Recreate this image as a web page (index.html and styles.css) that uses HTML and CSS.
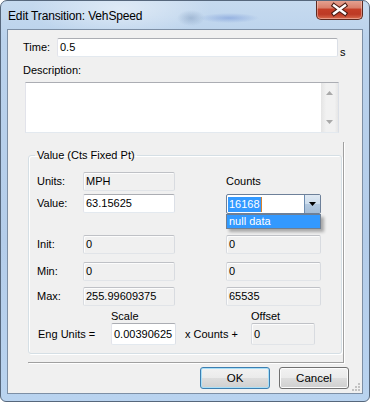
FILE: index.html
```html
<!DOCTYPE html>
<html lang="en">
<head>
    <meta charset="UTF-8">
    <title>Edit Transition: VehSpeed</title>
    <link rel="stylesheet" href="styles.css">
</head>
<body>
    <div class="window">
        <div class="titlebar">
            <span class="title">Edit Transition: VehSpeed</span>
            <div class="close-btn">
                <svg width="45" height="19" viewBox="0 0 45 19">
                    <path d="M17 5.5 L28 13.5 M28 5.5 L17 13.5" stroke="#4b1c14" stroke-width="4.6" stroke-linecap="square" fill="none"/>
                    <path d="M17 5.5 L28 13.5 M28 5.5 L17 13.5" stroke="#ffffff" stroke-width="2.4" stroke-linecap="square" fill="none"/>
                </svg>
            </div>
        </div>

        <div class="client">
            <div class="time-row">
                <span class="time-label">Time:</span>
                <div class="tb time-box">0.5</div>
                <span class="unit">s</span>
            </div>

            <div class="desc-label">Description:</div>
            <div class="textarea">
                <div class="vscroll">
                    <svg width="7" height="4" viewBox="0 0 7 4"><path d="M3.5 0 L7 4 L0 4 Z" fill="#a9a9a9"/></svg>
                    <svg width="7" height="4" viewBox="0 0 7 4"><path d="M0 0 L7 0 L3.5 4 Z" fill="#a9a9a9"/></svg>
                </div>
            </div>

            <div class="panel">
                <fieldset class="group">
                    <legend>Value (Cts Fixed Pt)</legend>

                    <div class="vrow">
                        <span class="lbl">Units:</span>
                        <div class="tb ro">MPH</div>
                        <span></span>
                        <span class="lbl">Counts</span>
                    </div>

                    <div class="vrow value-row">
                        <span class="lbl">Value:</span>
                        <div class="tb">63.15625</div>
                        <span></span>
                        <div class="combo">
                            <span class="sel">16168</span><span class="caret"></span>
                            <span class="drop-btn">
                                <svg width="7" height="4" viewBox="0 0 7 4"><path d="M0 0 L7 0 L3.5 4 Z" fill="#000"/></svg>
                            </span>
                            <div class="drop-list">null data</div>
                        </div>
                    </div>

                    <div class="vrow init-row">
                        <span class="lbl">Init:</span>
                        <div class="tb ro">0</div>
                        <span></span>
                        <div class="tb ro">0</div>
                    </div>

                    <div class="vrow min-row">
                        <span class="lbl">Min:</span>
                        <div class="tb ro">0</div>
                        <span></span>
                        <div class="tb ro">0</div>
                    </div>

                    <div class="vrow max-row">
                        <span class="lbl">Max:</span>
                        <div class="tb ro">255.99609375</div>
                        <span></span>
                        <div class="tb ro">65535</div>
                    </div>

                    <div class="erow head-row">
                        <span></span>
                        <span>Scale</span>
                        <span></span>
                        <span>Offset</span>
                    </div>

                    <div class="erow eng-row">
                        <span class="lbl">Eng Units =</span>
                        <div class="tb tall">0.00390625</div>
                        <span class="times">x Counts +</span>
                        <div class="tb tall ro">0</div>
                    </div>
                </fieldset>
            </div>

            <div class="buttons">
                <div class="btn default">OK</div>
                <div class="btn">Cancel</div>
            </div>

            <svg class="grip" width="10" height="10" viewBox="0 0 10 10">
                <rect x="7" y="1" width="2" height="2" fill="#c2c2c2"/>
                <rect x="4" y="4" width="2" height="2" fill="#c2c2c2"/>
                <rect x="7" y="4" width="2" height="2" fill="#c2c2c2"/>
                <rect x="1" y="7" width="2" height="2" fill="#c2c2c2"/>
                <rect x="4" y="7" width="2" height="2" fill="#c2c2c2"/>
                <rect x="7" y="7" width="2" height="2" fill="#c2c2c2"/>
            </svg>
        </div>
    </div>
</body>
</html>
```

FILE: styles.css
```css
* {
    box-sizing: border-box;
}
body {
    margin: 0;
    font-family: "Liberation Sans", Arial, sans-serif;
    font-size: 11px;
    color: #000;
    background: #fff;
}
.window {
    width: 370px;
    height: 402px;
    display: flex;
    flex-direction: column;
    padding: 0 6px 7px 6px;
    border: 1px solid #56677c;
    border-radius: 7px 7px 6px 6px;
    overflow: hidden;
    background:
        radial-gradient(ellipse 14px 8px at 190px 17px, rgba(95, 125, 165, 0.35), transparent),
        radial-gradient(ellipse 30px 5px at 228px 17px, rgba(70, 110, 200, 0.35), transparent),
        radial-gradient(ellipse 90px 30px at 120px 8px, rgba(255, 255, 255, 0.45), transparent),
        linear-gradient(to bottom, #c6daef 0%, #bad2ec 10%, #b4cdea 60%, #b9d3ef 100%);
}
.titlebar {
    height: 28px;
    display: flex;
    align-items: flex-start;
}
.title {
    margin: 8px 0 0 1px;
    font-size: 12px;
    line-height: 14px;
    letter-spacing: -0.15px;
}
.close-btn {
    margin: -1px 0 0 auto;
    width: 47px;
    height: 20px;
    border: 1px solid #5e2a20;
    border-top: none;
    border-radius: 0 0 5px 5px;
    background: linear-gradient(to bottom, #e6a595 0%, #d9806c 40%, #c43e27 50%, #bd3a25 75%, #d86c4e 100%);
    box-shadow: inset 0 0 0 1px rgba(255, 220, 210, 0.45);
}
.close-btn svg {
    display: block;
}
.client {
    flex: 1;
    position: relative;
    padding: 8px 0 0 15px;
    background: #f0f0f0;
    border: 1px solid #7d8fa5;
}
.tb {
    height: 19px;
    padding-left: 2px;
    border: 1px solid;
    border-color: #abadb3 #dbdfe6 #e3e9ef #e2e3ea;
    border-radius: 2px;
    background: #fff;
    line-height: 17px;
    white-space: nowrap;
    overflow: hidden;
}
.tb.ro {
    background: #f0f0f0;
    border-color: #bfc1c6 #d8dbe0 #e1e4e8 #d8dbe0;
    box-shadow: inset 1px 1px 0 #fcfcfc;
}
.tb.tall {
    height: 22px;
    line-height: 20px;
}
.time-row {
    display: flex;
    height: 19px;
}
.time-label {
    width: 34px;
    line-height: 19px;
}
.time-box {
    width: 281px;
}
.unit {
    align-self: flex-end;
    margin: 0 0 -2px 2px;
    line-height: 13px;
}
.desc-label {
    margin-top: 7px;
    line-height: 13px;
}
.textarea {
    width: 314px;
    height: 51px;
    margin: 5px 0 0 2px;
    display: flex;
    justify-content: flex-end;
    border: 1px solid;
    border-color: #abadb3 #dbdfe6 #e3e9ef #e2e3ea;
    background: #fff;
}
.vscroll {
    width: 17px;
    display: flex;
    flex-direction: column;
    align-items: center;
    justify-content: space-between;
    padding: 8px 0 8px 0;
    background: linear-gradient(to right, #e4e4e4, #f1f1f1 30%, #f1f1f1 80%, #e6e6e6);
}
.vscroll svg {
    display: block;
}
.panel {
    width: 316px;
    margin: 9px 0 0 5px;
    padding: 6px 1px 8px 0;
    border-right: 1px solid #a0a0a0;
    border-bottom: 1px solid #a0a0a0;
    box-shadow: 1px 1px 0 #fff;
}
.group {
    margin: 0;
    min-width: 0;
    padding: 10px 0 8px 8px;
    border: 1px solid #d5dfe5;
    border-radius: 3px;
    box-shadow: inset 1px 1px 0 #fff, 1px 1px 0 #fff;
}
.group legend {
    margin-left: -2px;
    padding: 0 2px;
    line-height: 14px;
}
.vrow {
    display: grid;
    grid-template-columns: 46px 92px 51px 95px;
    align-items: start;
    height: 19px;
}
.lbl {
    line-height: 19px;
}
.value-row {
    margin-top: 3px;
    height: 20px;
}
.init-row {
    margin-top: 21px;
}
.min-row {
    margin-top: 8px;
}
.max-row {
    margin-top: 6px;
}
.erow {
    display: grid;
    grid-template-columns: 74px 65px 75px 64px;
}
.head-row {
    margin-top: 4px;
    line-height: 13px;
}
.eng-row {
    height: 22px;
}
.eng-row .lbl {
    line-height: 22px;
    padding-left: 1px;
}
.times {
    line-height: 22px;
    padding-left: 9px;
}
.combo {
    position: relative;
    height: 20px;
    display: flex;
    align-items: center;
    border: 1px solid #6d8099;
    border-radius: 2px;
    background: #fff;
}
.combo .sel {
    margin-left: 1px;
    padding: 0 1px;
    line-height: 15px;
    background: #3399ff;
    color: #fff;
}
.combo .caret {
    width: 1px;
    height: 15px;
    background: #d8832e;
}
.drop-btn {
    margin-left: auto;
    width: 16px;
    height: 100%;
    display: flex;
    align-items: center;
    justify-content: center;
    border-left: 1px solid #6d8cb0;
    background: linear-gradient(to bottom, #dfe9f3 0%, #ccdcec 50%, #b3c9e0 51%, #a3bcd6 100%);
}
.drop-btn svg {
    display: block;
}
.drop-list {
    position: absolute;
    left: -1px;
    top: 19px;
    width: 95px;
    height: 15px;
    padding-left: 2px;
    line-height: 13px;
    border: 1px solid #6f7f93;
    background: #3399ff;
    color: #fff;
    box-shadow: 3px 3px 3px rgba(0, 0, 0, 0.3);
}
.buttons {
    display: flex;
    justify-content: flex-end;
    gap: 9px;
    margin-top: 4px;
    padding-right: 13px;
}
.btn {
    width: 70px;
    height: 22px;
    line-height: 20px;
    text-align: center;
    font-size: 11.5px;
    border: 1px solid #707070;
    border-radius: 3px;
    background: linear-gradient(to bottom, #f2f2f2 0%, #ebebeb 48%, #dddddd 52%, #cfcfcf 100%);
    box-shadow: inset 0 0 0 1px #fcfcfc;
}
.btn.default {
    border-color: #3c7fb1;
    box-shadow: inset 0 0 0 1px #a9dff8;
}
.grip {
    position: absolute;
    right: 1px;
    bottom: 1px;
}
```
